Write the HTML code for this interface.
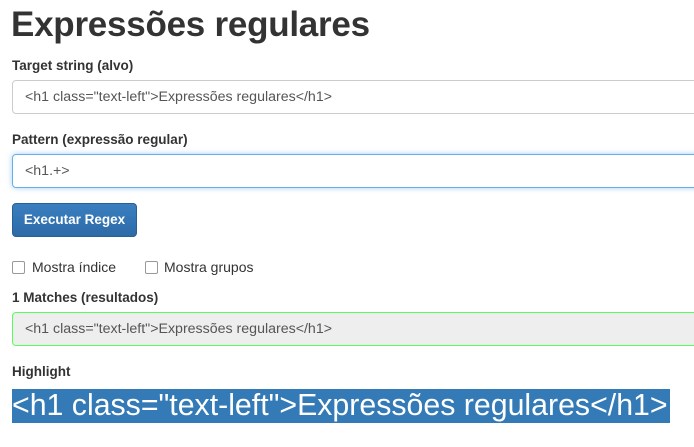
<!DOCTYPE html>
<html><head><style>
body{margin:0;width:694px;height:447px;overflow:hidden;background:#fff;font-family:"Liberation Sans",sans-serif;color:#333;position:relative}
.a{position:absolute;white-space:nowrap}
h1{position:absolute;left:11px;top:5px;margin:0;font-size:35px;font-weight:bold;letter-spacing:-0.25px}
.l{font-size:13.5px;font-weight:bold;left:12px}
.in{position:absolute;left:12px;width:700px;height:34px;border:1px solid #ccc;border-radius:4px;box-sizing:border-box;font-size:14.2px;padding:8px 12px;color:#555}
.cb{position:absolute;width:11px;height:11px;border:1px solid #999;border-radius:2px;background:#fff}
</style></head><body>
<h1>Expressões regulares</h1>
<div class="a l" style="top:58px">Target string (alvo)</div>
<div class="in" style="top:80px">&lt;h1 class="text-left"&gt;Expressões regulares&lt;/h1&gt;</div>
<div class="a l" style="top:132px">Pattern (expressão regular)</div>
<div class="in" style="top:154px;border-color:#66afe9;box-shadow:0 0 6px rgba(102,175,233,.6)">&lt;h1.+&gt;</div>
<div class="a" style="left:12px;top:203px;width:125px;height:34px;border-radius:4px;background:linear-gradient(#3a7fc0,#2d6aa7);border:1px solid #2a5f96;box-sizing:border-box;color:#fff;font-size:13.5px;font-weight:bold;text-align:center;line-height:32px">Executar Regex</div>
<div class="cb" style="left:12px;top:261px"></div>
<div class="a" style="left:32px;top:259px;font-size:14px">Mostra índice</div>
<div class="cb" style="left:145px;top:261px"></div>
<div class="a" style="left:164px;top:259px;font-size:14px">Mostra grupos</div>
<div class="a l" style="top:290px">1 Matches (resultados)</div>
<div class="in" style="top:312px;border-color:#5f5;background:#eee;height:34px">&lt;h1 class="text-left"&gt;Expressões regulares&lt;/h1&gt;</div>
<div class="a l" style="top:364px">Highlight</div>
<div class="a" style="left:12px;top:389px;width:658px;height:34px;background:#337ab7;color:#fff;font-size:30.3px;line-height:34px">&lt;h1 class="text-left"&gt;Expressões regulares&lt;/h1&gt;</div>
</body></html>
